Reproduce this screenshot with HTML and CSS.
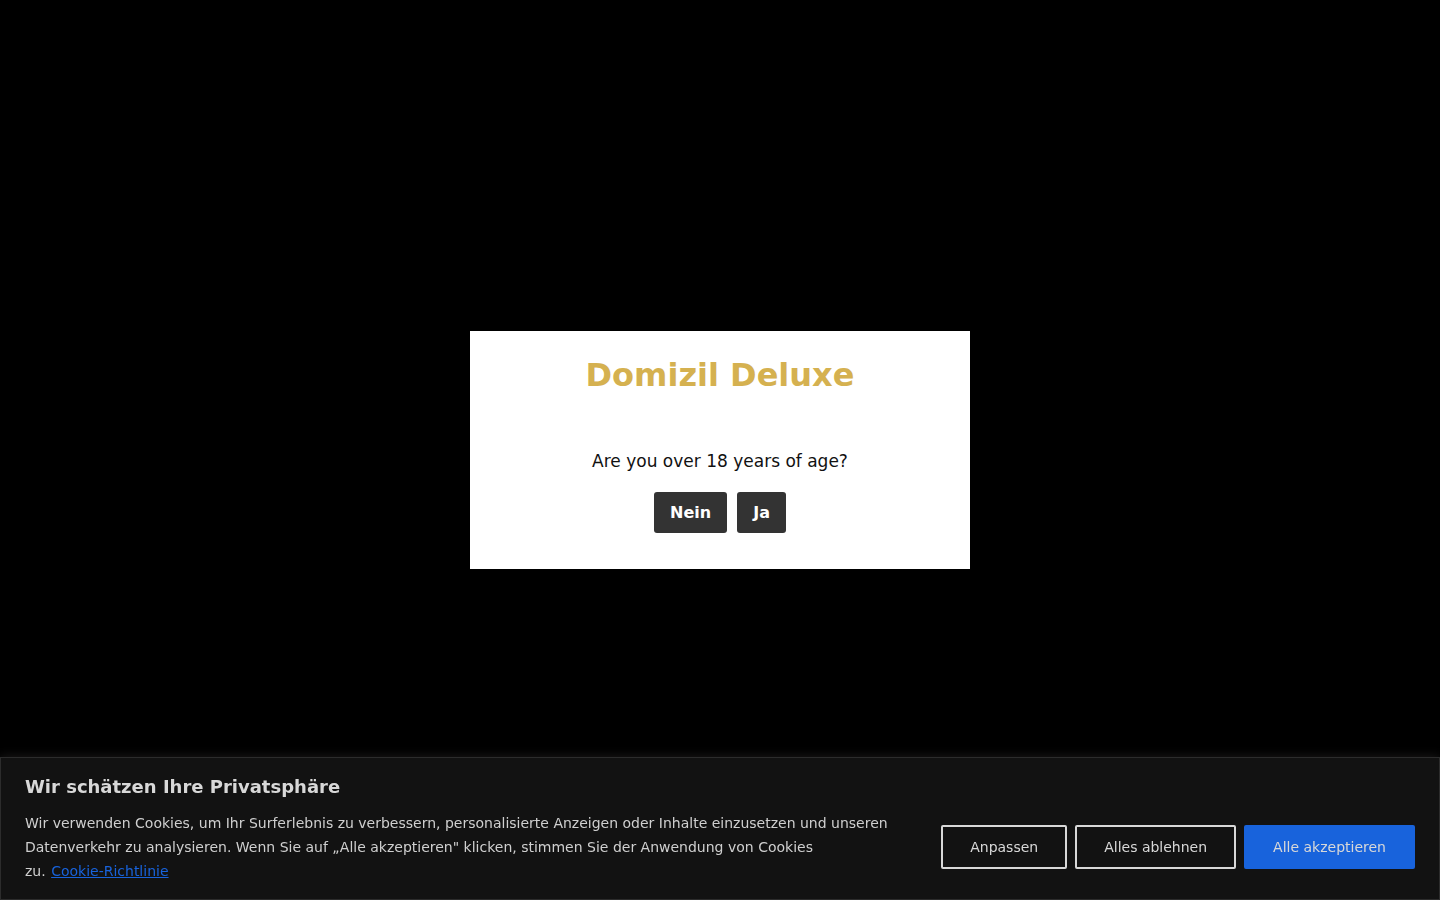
FILE: index.html
```html
<!DOCTYPE html>
<html lang="de">
<head>
    <meta charset="UTF-8">
    <meta name="viewport" content="width=device-width, initial-scale=1.0">
    <title>Domizil Deluxe</title>
    <link rel="stylesheet" href="styles.css">
</head>
<body>
    <!-- Altersabfrage -->
    <div class="age-overlay">
        <div class="age-box">
            <h1 class="age-title">Domizil Deluxe</h1>
            <p class="age-question">Are you over 18 years of age?</p>
            <div class="age-buttons">
                <button class="age-btn">Nein</button>
                <button class="age-btn">Ja</button>
            </div>
        </div>
    </div>

    <!-- Cookie-Leiste -->
    <div class="cookie-bar">
        <p class="cookie-title">Wir schätzen Ihre Privatsphäre</p>
        <div class="cookie-row">
            <p class="cookie-text">Wir verwenden Cookies, um Ihr Surferlebnis zu verbessern, personalisierte Anzeigen oder Inhalte einzusetzen und unseren Datenverkehr zu analysieren. Wenn Sie auf „Alle akzeptieren" klicken, stimmen Sie der Anwendung von Cookies <span class="nowrap">zu. <a href="#" class="cookie-link">Cookie-Richtlinie</a></span></p>
            <div class="cookie-buttons">
                <button class="cookie-btn">Anpassen</button>
                <button class="cookie-btn">Alles ablehnen</button>
                <button class="cookie-btn cookie-btn-accept">Alle akzeptieren</button>
            </div>
        </div>
    </div>
</body>
</html>
```

FILE: styles.css
```css
/* Grundlayout */
html, body {
    height: 100%;
}

body {
    margin: 0;
    background-color: #000000;
    font-family: 'DejaVu Sans', Verdana, sans-serif;
    overflow: hidden;
}

/* Altersabfrage */
.age-overlay {
    height: 100%;
    display: flex;
    justify-content: center;
    align-items: center;
}

.age-box {
    width: 500px;
    box-sizing: border-box;
    background-color: #ffffff;
    padding: 24px 20px 36px;
    text-align: center;
}

.age-title {
    margin: 0;
    font-size: 32px;
    line-height: 40px;
    font-weight: bold;
    color: #d5b150;
}

.age-question {
    margin: 54px 0 19px;
    font-size: 17px;
    line-height: 24px;
    color: #111111;
}

.age-buttons {
    display: flex;
    justify-content: center;
    gap: 10px;
}

.age-btn {
    font-family: inherit;
    font-size: 16px;
    font-weight: bold;
    line-height: 21px;
    padding: 10px 16px;
    background-color: #333333;
    color: #ffffff;
    border: none;
    border-radius: 3px;
    cursor: pointer;
}

/* Cookie-Leiste */
.cookie-bar {
    position: fixed;
    left: 0;
    right: 0;
    bottom: 0;
    background-color: #121212;
    border: 1px solid #2c2c2c;
    padding: 16.5px 24px;
    box-shadow: 0 -1px 10px 0 rgba(172, 171, 171, 0.15);
}

.cookie-title {
    margin: 0 0 12px;
    font-size: 18px;
    font-weight: bold;
    line-height: 24px;
    color: #d8d8d8;
}

.cookie-row {
    display: flex;
    align-items: center;
    gap: 24px;
}

.cookie-text {
    flex: 1;
    margin: 0;
    font-size: 14px;
    line-height: 24px;
    color: #cfcfcf;
}

.nowrap {
    white-space: nowrap;
}

.cookie-link {
    margin-left: 1px;
    color: #1863dc;
    text-decoration: underline;
}

.cookie-buttons {
    display: flex;
    gap: 8px;
}

.cookie-btn {
    font-family: inherit;
    font-size: 14px;
    line-height: 24px;
    padding: 8px 27px;
    background-color: transparent;
    color: #d8d8d8;
    border: 2px solid #d8d8d8;
    border-radius: 2px;
    cursor: pointer;
    white-space: nowrap;
}

.cookie-btn-accept {
    background-color: #1863dc;
    border-color: #1863dc;
}
```
